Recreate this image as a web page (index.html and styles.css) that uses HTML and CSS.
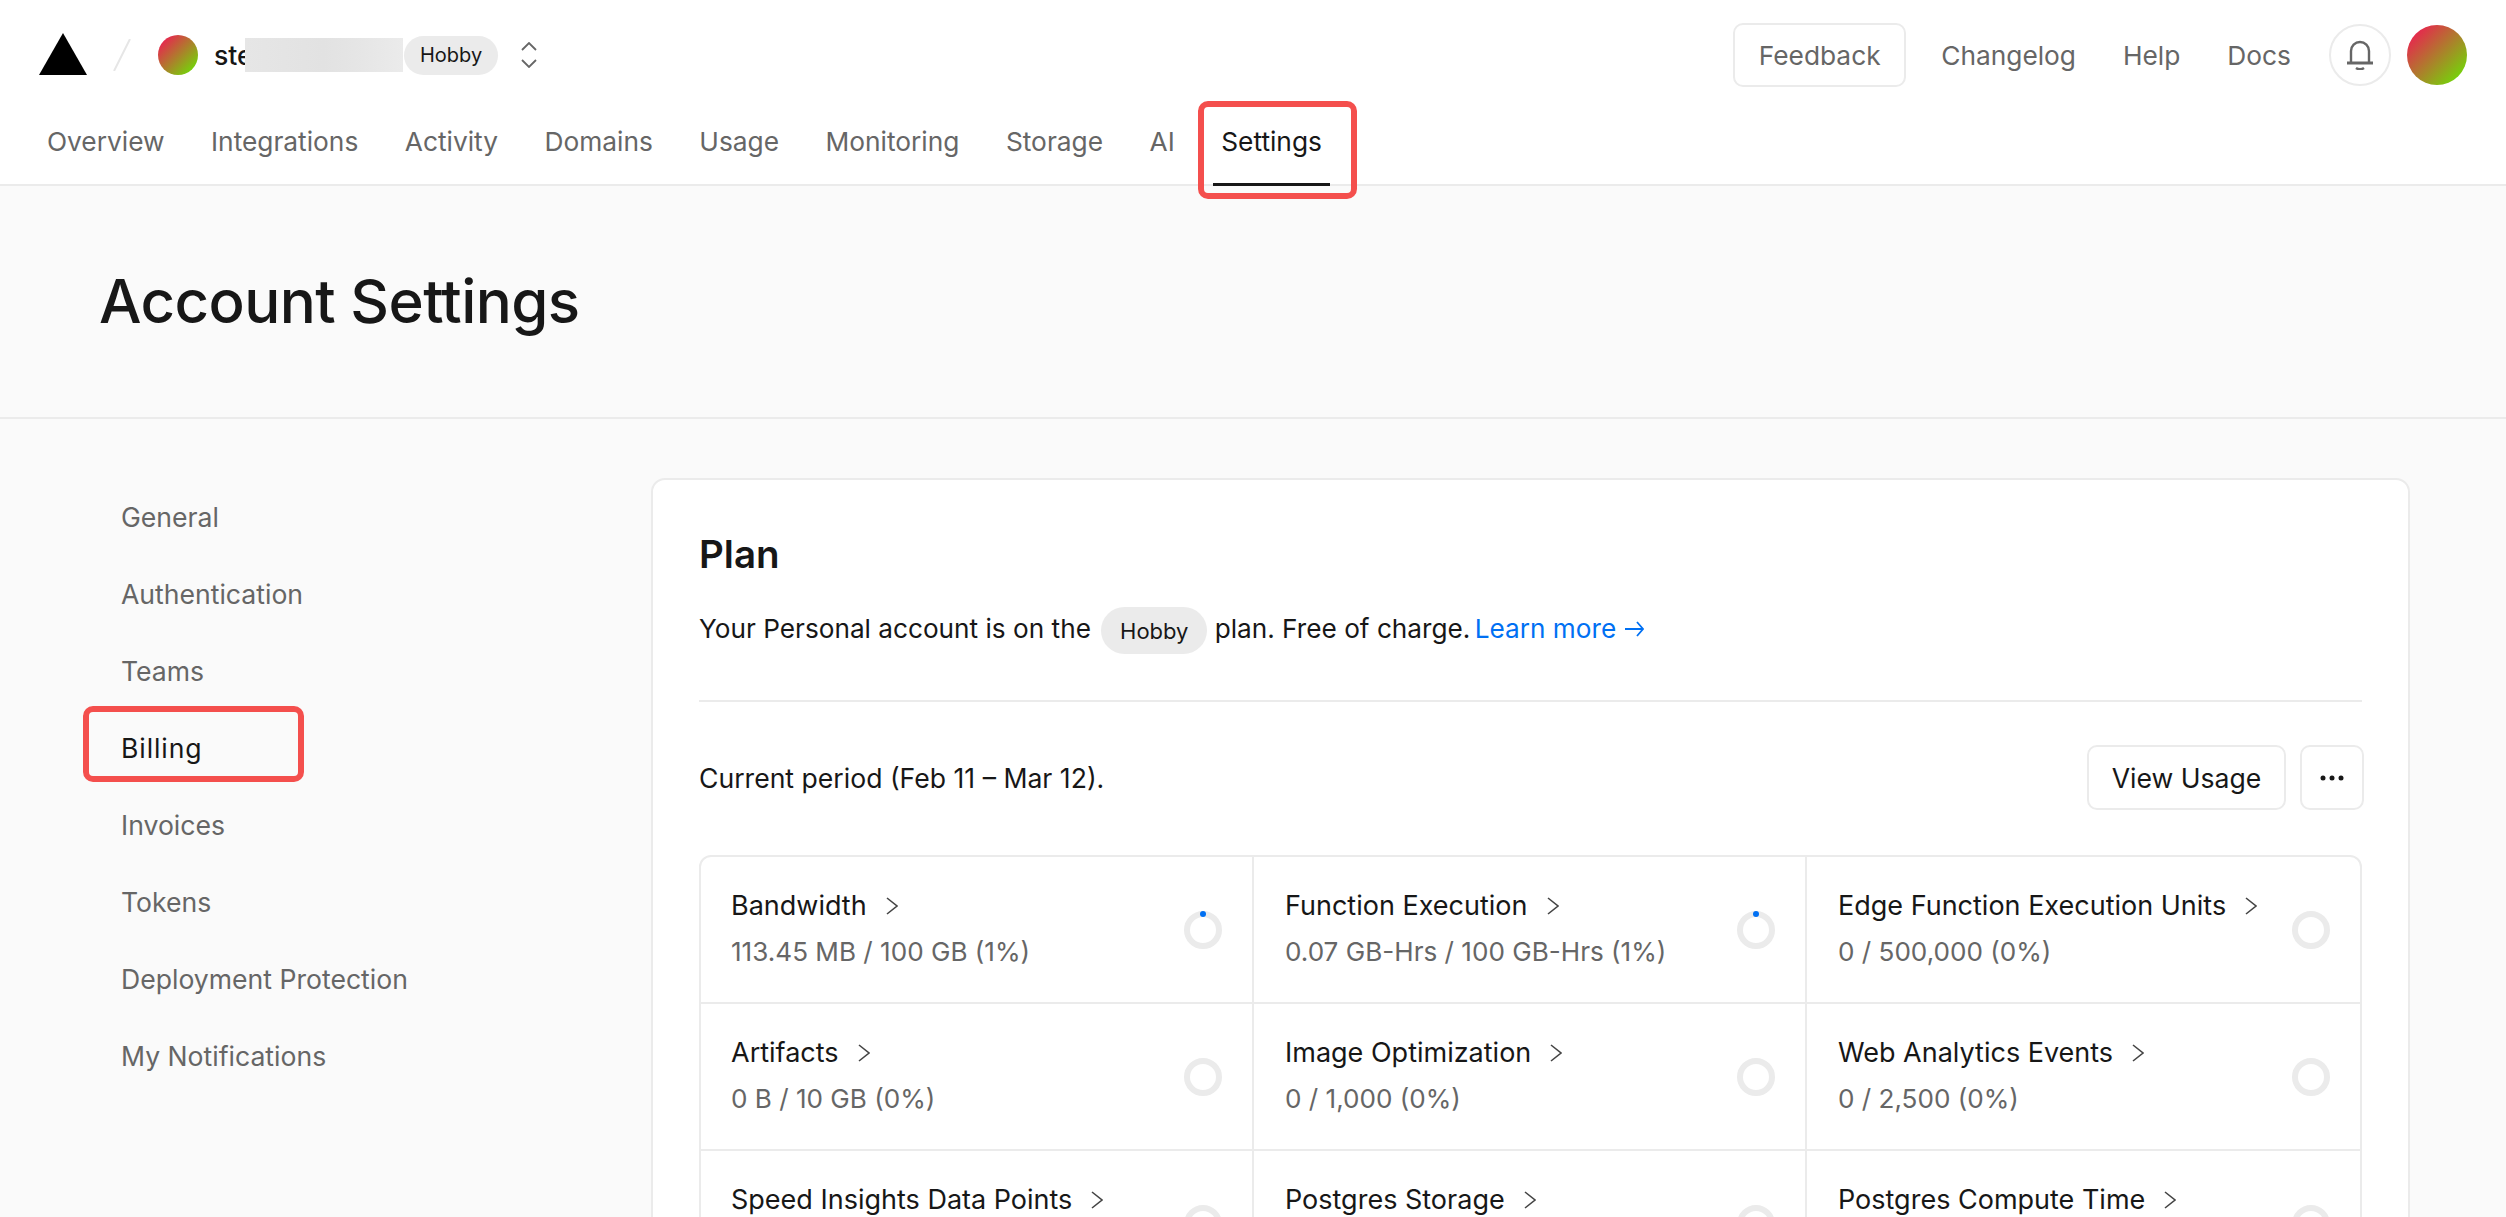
FILE: index.html
```html
<!DOCTYPE html>
<html>
	<head>
		<meta charset="UTF-8">
		<title>Account Settings</title>
		<link rel="stylesheet" href="styles.css">
	</head>
	<body>
		<header class="top">
			<div class="top-row">
				<svg class="logo" viewBox="0 0 48 42"><polygon points="24,0 48,42 0,42" fill="#000"/></svg>
				<svg class="slash" viewBox="0 0 18 32"><line x1="17" y1="0" x2="1" y2="32" stroke="#e6e6e6" stroke-width="2"/></svg>
				<span class="avatar small"></span>
				<span class="name">ste</span>
				<span class="blurred"></span>
				<span class="pill">Hobby</span>
				<svg class="updown" viewBox="0 0 16 26" fill="none" stroke="#666" stroke-width="1.8"><polyline points="1,8 8,1 15,8"/><polyline points="1,18 8,25 15,18"/></svg>
				<div class="top-right">
					<a class="btn feedback" href="#">Feedback</a>
					<a class="top-link" href="#">Changelog</a>
					<a class="top-link" href="#">Help</a>
					<a class="top-link" href="#">Docs</a>
					<span class="bell">
						<svg viewBox="0 0 28 30" width="28" height="30" fill="none" stroke="#666" stroke-width="2.4"><path d="M5 22V11a9 9 0 0 1 18 0v11"/><path d="M1 23h26" stroke-width="3"/><path d="M10 28c2 1.600 6 1.600 8 0"/></svg>
					</span>
					<span class="avatar"></span>
				</div>
			</div>
			<nav class="tabs">
				<a href="#">Overview</a>
				<a href="#">Integrations</a>
				<a href="#">Activity</a>
				<a href="#">Domains</a>
				<a href="#">Usage</a>
				<a href="#">Monitoring</a>
				<a href="#">Storage</a>
				<a href="#">AI</a>
				<a class="active" href="#">Settings<i class="mark"></i></a>
			</nav>
		</header>

		<div class="title-band">
			<h1>Account Settings</h1>
		</div>

		<div class="main">
			<ul class="side">
				<li><a href="#">General</a></li>
				<li><a href="#">Authentication</a></li>
				<li><a href="#">Teams</a></li>
				<li class="active"><a href="#">Billing</a><i class="mark"></i></li>
				<li><a href="#">Invoices</a></li>
				<li><a href="#">Tokens</a></li>
				<li><a href="#">Deployment Protection</a></li>
				<li><a href="#">My Notifications</a></li>
			</ul>

			<section class="card">
				<h2>Plan</h2>
				<p class="plan-line">Your Personal account is on the <span class="pill plan-pill">Hobby</span> plan. Free of charge. <a class="learn" href="#">Learn more <svg viewBox="0 0 20 16" width="20" height="16" fill="none" stroke="#0070f3" stroke-width="1.8"><path d="M1 8h18M13 1l6 7-6 7"/></svg></a></p>
				<hr>
				<div class="period">
					<span>Current period (Feb 11 – Mar 12).</span>
					<div class="period-btns">
						<a class="btn usage" href="#">View Usage</a>
						<a class="btn more" href="#"><svg viewBox="0 0 24 6" width="24" height="6" fill="#171717"><circle cx="3" cy="3" r="2.500"/><circle cx="12" cy="3" r="2.500"/><circle cx="21" cy="3" r="2.500"/></svg></a>
					</div>
				</div>
				<div class="usage-grid">
					<div class="cell">
						<div><div class="cell-title">Bandwidth <svg class="chev" viewBox="0 0 12 18"><polyline points="1,1 11,9 1,17"/></svg></div><div class="cell-value">113.45 MB / 100 GB (1%)</div></div>
						<span class="ring used"></span>
					</div>
					<div class="cell">
						<div><div class="cell-title">Function Execution <svg class="chev" viewBox="0 0 12 18"><polyline points="1,1 11,9 1,17"/></svg></div><div class="cell-value">0.07 GB-Hrs / 100 GB-Hrs (1%)</div></div>
						<span class="ring used"></span>
					</div>
					<div class="cell">
						<div><div class="cell-title">Edge Function Execution Units <svg class="chev" viewBox="0 0 12 18"><polyline points="1,1 11,9 1,17"/></svg></div><div class="cell-value">0 / 500,000 (0%)</div></div>
						<span class="ring"></span>
					</div>
					<div class="cell">
						<div><div class="cell-title">Artifacts <svg class="chev" viewBox="0 0 12 18"><polyline points="1,1 11,9 1,17"/></svg></div><div class="cell-value">0 B / 10 GB (0%)</div></div>
						<span class="ring"></span>
					</div>
					<div class="cell">
						<div><div class="cell-title">Image Optimization <svg class="chev" viewBox="0 0 12 18"><polyline points="1,1 11,9 1,17"/></svg></div><div class="cell-value">0 / 1,000 (0%)</div></div>
						<span class="ring"></span>
					</div>
					<div class="cell">
						<div><div class="cell-title">Web Analytics Events <svg class="chev" viewBox="0 0 12 18"><polyline points="1,1 11,9 1,17"/></svg></div><div class="cell-value">0 / 2,500 (0%)</div></div>
						<span class="ring"></span>
					</div>
					<div class="cell">
						<div><div class="cell-title">Speed Insights Data Points <svg class="chev" viewBox="0 0 12 18"><polyline points="1,1 11,9 1,17"/></svg></div><div class="cell-value">0 / 10,000 (0%)</div></div>
						<span class="ring"></span>
					</div>
					<div class="cell">
						<div><div class="cell-title">Postgres Storage <svg class="chev" viewBox="0 0 12 18"><polyline points="1,1 11,9 1,17"/></svg></div><div class="cell-value">0 B / 256 MB (0%)</div></div>
						<span class="ring"></span>
					</div>
					<div class="cell">
						<div><div class="cell-title">Postgres Compute Time <svg class="chev" viewBox="0 0 12 18"><polyline points="1,1 11,9 1,17"/></svg></div><div class="cell-value">0 / 60 Hrs (0%)</div></div>
						<span class="ring"></span>
					</div>
				</div>
			</section>
		</div>
	</body>
</html>
```

FILE: styles.css
```css
*{
	padding:0px;margin:0px;list-style: none;
	box-sizing: border-box;
}
a{
	text-decoration: none;
	color: inherit;
}
html,body{
	height: 1217px;
	overflow: hidden;
}
body{
	background-color: #fafafa;
	color: #171717;
	font-family: Inter, "Liberation Sans", sans-serif;
	font-size: 26.6px;
}

/* header */
.top{
	background-color: #fff;
	height: 186px;
	border-bottom: 2px solid #ebebeb;
}
.top-row{
	display: flex;
	align-items: center;
	height: 98px;
	padding: 12px 39px 0px 39px;
}
.logo{
	width: 48px;
	height: 42px;
	margin-top: -2px;
}
.slash{
	width: 18px;
	height: 32px;
	margin-left: 26px;
}
.avatar{
	display: block;
	flex: none;
	width: 60px;
	height: 60px;
	border-radius: 50%;
	background: linear-gradient(135deg,#e8254f 12%,#74d40a 88%);
}
.avatar.small{
	width: 40px;
	height: 40px;
	margin-left: 27px;
}
.name{
	margin-left: 16px;
	width: 31px;
	font-weight: 500;
}
/* sits on top of the end of the name */
.blurred{
	position: relative;
	width: 158px;
	height: 34px;
	background: linear-gradient(90deg,#e6e6e6,#e2e2e2 50%,#e6e6e6 75%,#ebebeb);
}
.pill{
	display: inline-flex;
	align-items: center;
	justify-content: center;
	height: 39px;
	padding: 0px 16px;
	margin-left: 1px;
	border-radius: 20px;
	background-color: #ebebeb;
	font-size: 20px;
}
.updown{
	width: 16px;
	height: 26px;
	margin-left: 23px;
}
.top-right{
	display: flex;
	align-items: center;
	margin-left: auto;
	color: #666;
	font-size: 26.3px;
}
.btn{
	display: flex;
	align-items: center;
	justify-content: center;
	background-color: #fff;
	border: 2px solid #ebebeb;
	border-radius: 10px;
}
.feedback{
	width: 173px;
	height: 64px;
	margin-right: 35px;
}
.top-link{
	margin-right: 47px;
}
.top-link:nth-child(4){
	margin-right: 38px;
}
.bell{
	display: flex;
	align-items: center;
	justify-content: center;
	width: 62px;
	height: 62px;
	margin-right: 16px;
	border: 2px solid #ebebeb;
	border-radius: 50%;
}
.tabs{
	display: flex;
	gap: 30.5px;
	padding-left: 39px;
	color: #666;
	font-size: 26.3px;
}
.tabs a{
	position: relative;
	display: block;
	height: 88px;
	line-height: 88px;
	padding: 0px 8px;
}
.tabs a.active{
	color: #171717;
	box-shadow: inset 0px -3px 0px #171717;
}
.tabs a .mark{
	left: -15px;
	top: 3px;
	width: 159px;
	height: 98px;
}

/* red annotation boxes */
.mark{
	position: absolute;
	border: 6px solid #f44f4d;
	border-radius: 10px;
}

.title-band{
	display: flex;
	align-items: center;
	height: 233px;
	padding-left: 99px;
	border-bottom: 2px solid #ebebeb;
	padding-bottom: 2px;
}
h1{
	font-size: 60px;
	font-weight: 500;
	letter-spacing: -0.6px;
}

.main{
	display: flex;
	padding: 59px 96px 0px 121px;
}
.side{
	flex: none;
	width: 530px;
	color: #666;
}
.side li{
	position: relative;
	height: 77px;
	line-height: 78px;
}
.side li.active{
	color: #171717;
	letter-spacing: 0.9px;
}
.side li .mark{
	left: -38px;
	top: -3px;
	width: 221px;
	height: 76px;
}

.card{
	flex: 1;
	height: 900px;
	padding: 51px 46px 0px 46px;
	background-color: #fff;
	border: 2px solid #ebebeb;
	border-radius: 14px;
}
h2{
	font-size: 38.5px;
	font-weight: 600;
	line-height: 46px;
}
.plan-line{
	display: flex;
	align-items: center;
	white-space: pre;
	height: 47px;
	margin-top: 28px;
	font-size: 26.2px;
}
.plan-line .plan-pill{
	height: 47px;
	width: 106px;
	margin: 4px 0px 0px 3px;
	border-radius: 24px;
	font-size: 22px;
}
.learn{
	display: inline-flex;
	align-items: center;
	margin-left: -3px;
	color: #0070f3;
	white-space: pre;
}
hr{
	border: 0;
	border-top: 2px solid #ebebeb;
	margin: 48px 0px 43px;
}
.period{
	display: flex;
	align-items: center;
	justify-content: space-between;
	height: 65px;
	margin-right: -2px;
}
.period-btns{
	display: flex;
	gap: 14px;
}
.usage{
	width: 199px;
	height: 65px;
}
.more{
	width: 64px;
	height: 65px;
}
.usage-grid{
	display: grid;
	grid-template-columns: repeat(3,1fr);
	margin-top: 45px;
	border: 2px solid #ebebeb;
	border-radius: 12px;
}
.cell{
	display: flex;
	align-items: center;
	justify-content: space-between;
	height: 147px;
	padding: 0px 30px 2px 31px;
	border-bottom: 2px solid #ebebeb;
	border-right: 2px solid #ebebeb;
}
.cell:nth-child(3n+1){
	padding-left: 30px;
}
.cell:nth-child(3n){
	border-right: 0;
}
.cell-title{
	display: flex;
	align-items: center;
	line-height: 36px;
	font-size: 27px;
}
.chev{
	width: 12px;
	height: 18px;
	margin-left: 19px;
	fill: none;
	stroke: #444;
	stroke-width: 1.6;
}
.cell-value{
	margin-top: 10px;
	line-height: 36px;
	color: #666;
	font-size: 26.1px;
}
.ring{
	position: relative;
	flex: none;
	width: 38px;
	height: 38px;
	margin-top: 2px;
	border: 6px solid #ebebeb;
	border-radius: 50%;
}
.ring.used::after{
	content: "";
	position: absolute;
	left: 10px;
	top: -6px;
	width: 6px;
	height: 6px;
	border-radius: 50%;
	background-color: #0070f3;
}
```
